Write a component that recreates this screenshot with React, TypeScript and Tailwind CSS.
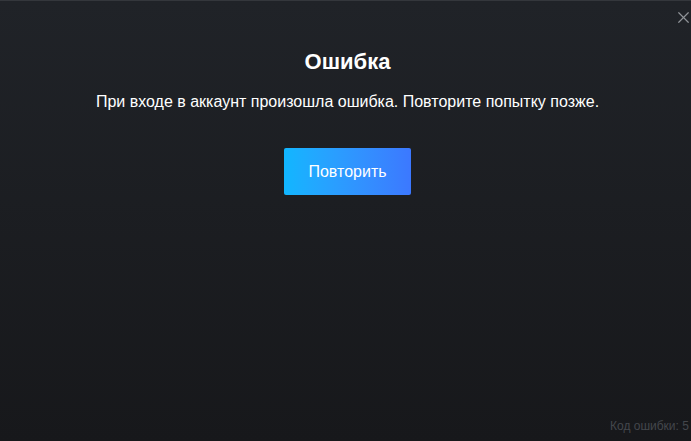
import { X } from "lucide-react"

export default function App() {
  return (
    <div className="relative h-[441px] w-[691px] overflow-hidden border-t border-[#34373c] bg-gradient-to-b from-[#202328] to-[#17181b] font-['Liberation_Sans',Arial,sans-serif]">
      {/* close */}
      <button className="absolute right-[-2px] top-[7px] text-[#8f9297]">
        <X size={19} strokeWidth={1.5} />
      </button>

      <div className="flex flex-col items-center pl-[4px] pt-[47px]">
        <h1 className="text-[22px] font-bold leading-[28px] text-white">Ошибка</h1>
        <p className="mt-[15px] text-[16px] leading-[22px] text-white">
          При входе в аккаунт произошла ошибка. Повторите попытку позже.
        </p>
        <button className="mt-[35px] flex h-[47px] w-[127px] items-center justify-center rounded-[2px] bg-gradient-to-r from-[#10b6ff] to-[#3c78ff] text-[16px] text-white">
          Повторить
        </button>
      </div>

      {/* error code */}
      <div className="absolute left-[610px] top-[416px] whitespace-nowrap text-[12px] text-[#44474c]">
        Код ошибки: 5
      </div>
    </div>
  )
}
